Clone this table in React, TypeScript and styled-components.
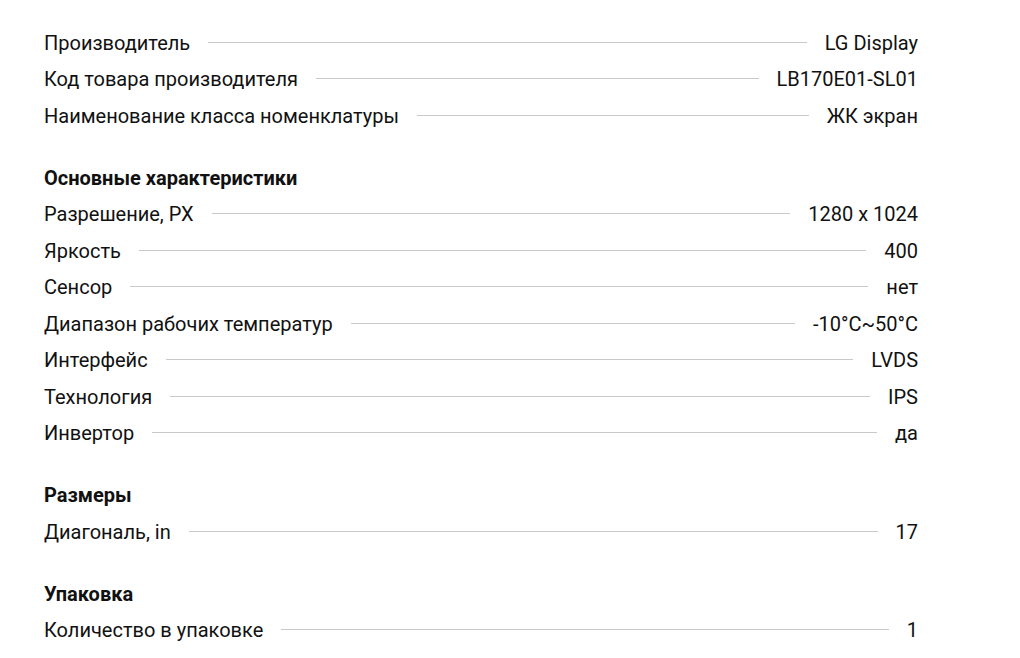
import styled, { createGlobalStyle } from "styled-components";

const GlobalStyle = createGlobalStyle`
  body {
    margin: 0;
    background: #ffffff;
    font-family: Roboto, "Liberation Sans", sans-serif;
    color: #111111;
  }
`;

type Spec = { label: string; value: string };
type Section = { title?: string; items: Spec[] };

const sections: Section[] = [
  {
    items: [
      { label: "Производитель", value: "LG Display" },
      { label: "Код товара производителя", value: "LB170E01-SL01" },
      { label: "Наименование класса номенклатуры", value: "ЖК экран" },
    ],
  },
  {
    title: "Основные характеристики",
    items: [
      { label: "Разрешение, PX", value: "1280 x 1024" },
      { label: "Яркость", value: "400" },
      { label: "Сенсор", value: "нет" },
      { label: "Диапазон рабочих температур", value: "-10°C~50°C" },
      { label: "Интерфейс", value: "LVDS" },
      { label: "Технология", value: "IPS" },
      { label: "Инвертор", value: "да" },
    ],
  },
  {
    title: "Размеры",
    items: [{ label: "Диагональ, in", value: "17" }],
  },
  {
    title: "Упаковка",
    items: [{ label: "Количество в упаковке", value: "1" }],
  },
];

const App = () => {
  return (
    <>
      <GlobalStyle />
      <Wrapper>
        {sections.map((section, i) => (
          <Group key={i} $first={i === 0}>
            {section.title && <Heading>{section.title}</Heading>}
            {section.items.map((item) => (
              <Row key={item.label}>
                <Label>{item.label}</Label>
                <Dots />
                <Value>{item.value}</Value>
              </Row>
            ))}
          </Group>
        ))}
      </Wrapper>
    </>
  );
};

const Wrapper = styled.main`
  padding: 24.5px 102px 0 44px;
`;

const Group = styled.section<{ $first: boolean }>`
  margin-top: ${(p) => (p.$first ? "0" : "25.5px")};
`;

const Heading = styled.h3`
  margin: 0;
  height: 36.5px;
  display: flex;
  align-items: center;
  font-size: 20px;
  font-weight: 700;
  color: #111111;
`;

const Row = styled.div`
  height: 36.5px;
  display: flex;
  align-items: center;
  gap: 18px;
  font-size: 20px;
`;

const Label = styled.span`
  white-space: nowrap;
`;

const Dots = styled.span`
  flex: 1;
  height: 1px;
  background: #c9c9c9;
  margin-top: -1px;
`;

const Value = styled.span`
  white-space: nowrap;
`;

export default App;
